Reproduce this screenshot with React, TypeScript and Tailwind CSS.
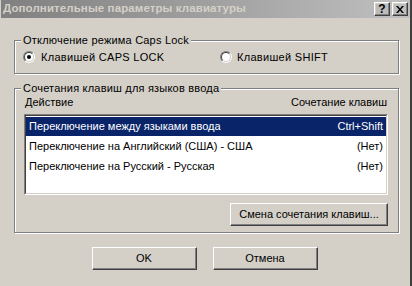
import React from "react";

const raised =
  "border border-t-white border-l-white border-r-[#404040] border-b-[#404040] shadow-[inset_-1px_-1px_0_#808080,inset_1px_1px_0_#d4d0c8]";

function GroupBox({
  legend,
  className,
  children,
}: {
  legend: string;
  className: string;
  children?: React.ReactNode;
}) {
  return (
    <div
      className={
        "relative border border-[#808080] shadow-[inset_1px_1px_0_#fff,1px_1px_0_#fff] " +
        className
      }
    >
      <span className="absolute left-[6px] top-[-8px] bg-[#d4d0c8] px-[2px] leading-[14px] tracking-[0.2px]">
        {legend}
      </span>
      {children}
    </div>
  );
}

function Radio({ checked }: { checked?: boolean }) {
  return (
    <span className="relative inline-block w-[12px] h-[12px] rounded-full border border-t-[#808080] border-l-[#808080] border-r-white border-b-white">
      <span className="absolute inset-0 rounded-full border border-t-[#404040] border-l-[#404040] border-r-[#d4d0c8] border-b-[#d4d0c8] bg-white flex items-center justify-center">
        {checked && <span className="w-[4px] h-[4px] rounded-full bg-black" />}
      </span>
    </span>
  );
}

export default function App() {
  return (
    <div
      className="w-[412px] h-[286px] bg-[#d4d0c8] text-black text-[11px] overflow-hidden flex flex-col border-l border-l-[#d4d0c8] border-r-2 border-r-[#404040]"
      style={{ fontFamily: '"Liberation Sans", Arial, sans-serif' }}
    >
      {/* Title bar */}
      <div className="h-[18px] mt-0 flex items-center bg-gradient-to-r from-[#808080] to-[#c0c0c0] pl-[2px] pr-[2px]">
        <span className="flex-1 font-bold text-[11.5px] text-[#d4d0c8] tracking-[0.1px]">
          Дополнительные параметры клавиатуры
        </span>
        <div className={"w-[16px] h-[14px] flex items-center justify-center font-bold text-[12px] leading-none " + raised}>
          ?
        </div>
        <div className={"ml-[2px] w-[16px] h-[14px] flex items-center justify-center " + raised}>
          <svg width="8" height="7" viewBox="0 0 8 7">
            <path d="M0 0h2l2 2.5L6 0h2L5 3.5 8 7H6L4 4.5 2 7H0l3-3.5z" fill="#000" />
          </svg>
        </div>
      </div>

      {/* Group 1 */}
      <GroupBox legend="Отключение режима Caps Lock" className="ml-[13px] mt-[22px] w-[385px] h-[34px]">
        <div className="flex items-center h-full">
          <div className="flex items-center ml-[8px] w-[197px]">
            <Radio checked />
            <span className="ml-[6px] tracking-[0.3px]">Клавишей CAPS LOCK</span>
          </div>
          <div className="flex items-center">
            <Radio />
            <span className="ml-[5px] tracking-[0.3px]">Клавишей SHIFT</span>
          </div>
        </div>
      </GroupBox>

      {/* Group 2 */}
      <GroupBox legend="Сочетания клавиш для языков ввода" className="ml-[13px] mt-[14px] w-[385px] h-[145px]">
        <div className="flex flex-col pl-[9px] pr-[10px] pt-[6px]">
          <div className="flex justify-between h-[14px] items-center px-[1px]">
            <span>Действие</span>
            <span>Сочетание клавиш</span>
          </div>
          <div className="mt-[5px] h-[81px] bg-white border border-t-[#808080] border-l-[#808080] border-r-white border-b-white">
            <div className="h-full border border-t-[#404040] border-l-[#404040] border-r-[#d4d0c8] border-b-[#d4d0c8] pt-[1px]">
              <div className="h-[19px] flex justify-between items-center bg-[#0a246a] text-white px-[3px]">
                <span>Переключение между языками ввода</span>
                <span>Ctrl+Shift</span>
              </div>
              <div className="h-[20px] flex justify-between items-center px-[3px]">
                <span>Переключение на Английский (США) - США</span>
                <span>(Нет)</span>
              </div>
              <div className="h-[20px] flex justify-between items-center px-[3px]">
                <span>Переключение на Русский - Русская</span>
                <span>(Нет)</span>
              </div>
            </div>
          </div>
          <div className="flex justify-end mt-[8px]">
            <div className={"w-[158px] h-[23px] flex items-center justify-center " + raised}>
              Смена сочетания клавиш...
            </div>
          </div>
        </div>
      </GroupBox>

      {/* Buttons */}
      <div className="flex justify-center gap-[16px] mt-[14px] pr-[2px]">
        <div className={"w-[105px] h-[23px] flex items-center justify-center " + raised}>OK</div>
        <div className={"w-[105px] h-[23px] flex items-center justify-center " + raised}>Отмена</div>
      </div>
    </div>
  );
}
